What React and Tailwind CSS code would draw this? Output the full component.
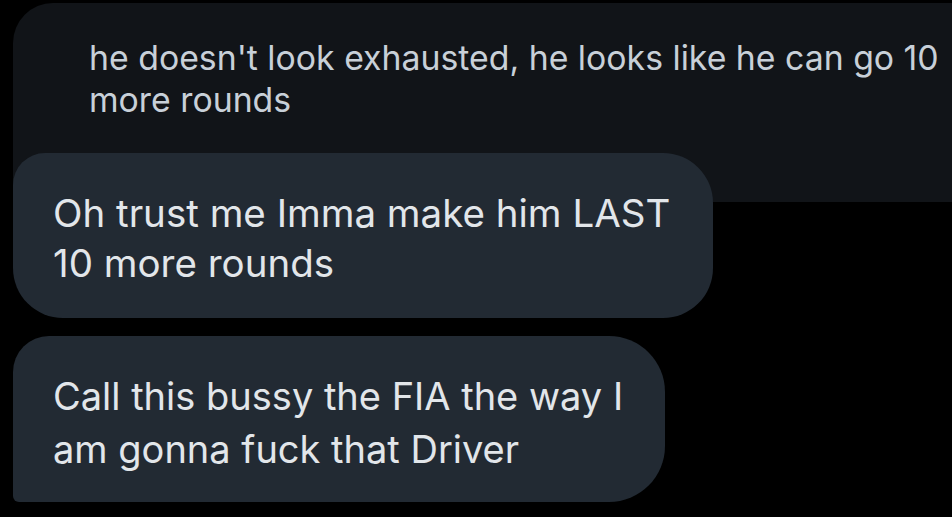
export default function App() {
  return (
    <div className="w-[952px] h-[517px] bg-black overflow-hidden pt-[3px] font-['Inter',sans-serif]">
      <div className="ml-[13px] h-[199px] rounded-tl-[40px] bg-[#111418] pl-[76px] pt-[34px]">
        <p className="text-[33.8px] leading-[42px] text-[#c8d0d8] whitespace-nowrap">
          he doesn't look exhausted, he looks like he can go 10
          <br />
          more rounds
        </p>
      </div>
      <div className="-mt-[49px] ml-[13px] w-[700px] h-[165px] rounded-tl-[32px] rounded-tr-[50px] rounded-br-[50px] rounded-bl-[50px] bg-[#222a33] pl-[40px] pt-[35px]">
        <p className="text-[38.5px] leading-[50px] text-[#e2e6ea] whitespace-nowrap">
          Oh trust me Imma make him LAST
          <br />
          10 more rounds
        </p>
      </div>
      <div className="mt-[18px] ml-[13px] w-[652px] h-[166px] rounded-tl-[36px] rounded-tr-[56px] rounded-br-[56px] rounded-bl-[6px] bg-[#222a33] pl-[40px] pt-[34px]">
        <p className="text-[38px] leading-[53px] text-[#e2e6ea] whitespace-nowrap">
          Call this bussy the FIA the way I
          <br />
          am gonna fuck that Driver
        </p>
      </div>
    </div>
  )
}
